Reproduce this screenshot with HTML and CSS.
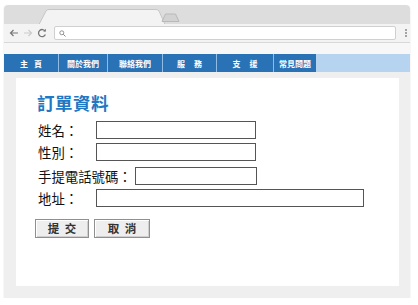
FILE: index.html
```html
<!DOCTYPE html>
<html lang="zh-Hant">
<head>
<meta charset="utf-8">
<title>訂單資料</title>
<link rel="stylesheet" href="styles.css">
</head>
<body>
<div class="window">
  <div class="tabbar">
    <svg class="tabs" width="406" height="19" viewBox="0 0 406 19">
      <path d="M35 19.5 L42 6 Q43 4.5 45 4.5 L152 4.5 Q154 4.5 155 6 L161 19.5 Z" fill="#f3f3f3" stroke="#c6c6c6" stroke-width="1"/>
      <path d="M158 16.5 L161.5 9 L171.5 9 L175 16.5 Z" fill="#d2d2d2" stroke="#b9b9b9" stroke-width="1"/>
    </svg>
  </div>
  <div class="toolbar">
    <svg class="tb-icon" width="10" height="10" viewBox="0 0 10 10"><path d="M9 5 H1.5 M4.5 2 L1.5 5 L4.5 8" fill="none" stroke="#777" stroke-width="1.2"/></svg>
    <svg class="tb-icon" width="10" height="10" viewBox="0 0 10 10"><path d="M1 5 H8.5 M5.5 2 L8.5 5 L5.5 8" fill="none" stroke="#ccc" stroke-width="1.2"/></svg>
    <svg class="tb-icon" width="10" height="10" viewBox="0 0 10 10"><path d="M8.2 3.2 A3.6 3.6 0 1 0 8.4 6.6" fill="none" stroke="#777" stroke-width="1.3"/><path d="M6.2 3.4 L9 3.6 L8.8 0.8 Z" fill="#777"/></svg>
    <div class="address">
      <svg width="7" height="7" viewBox="0 0 7 7"><circle cx="2.8" cy="2.8" r="2" fill="none" stroke="#888" stroke-width="0.9"/><path d="M4.3 4.3 L6.5 6.5" stroke="#888" stroke-width="1"/></svg>
    </div>
    <div class="menu-dots"><span></span><span></span><span></span></div>
  </div>
  <div class="spacer"></div>
  <nav class="navbar">
    <ul class="nav">
      <li class="nav-item">主 頁</li>
      <li class="nav-item">關於我們</li>
      <li class="nav-item">聯絡我們</li>
      <li class="nav-item">服 務</li>
      <li class="nav-item">支 援</li>
      <li class="nav-item">常見問題</li>
    </ul>
  </nav>
  <main class="main">
    <section class="card">
      <h1 class="title">訂單資料</h1>
      <form class="form">
        <div class="row"><label class="label">姓名：</label><input class="field field-short" type="text"></div>
        <div class="row"><label class="label">性別：</label><input class="field field-short" type="text"></div>
        <div class="row"><label class="label">手提電話號碼：</label><input class="field field-phone" type="text"></div>
        <div class="row"><label class="label">地址：</label><input class="field field-long" type="text"></div>
        <div class="buttons">
          <button class="btn btn-submit" type="button">提 交</button>
          <button class="btn btn-cancel" type="button">取 消</button>
        </div>
      </form>
    </section>
  </main>
</div>
</body>
</html>
```
FILE: styles.css
```css
* { box-sizing: border-box; }
html, body { margin: 0; padding: 0; background: #ffffff; }
body { font-family: "Noto Sans CJK TC", "Noto Sans", sans-serif; }

.window {
  margin: 5px 0 0 4px;
  width: 406px;
  height: 293px;
  display: flex;
  flex-direction: column;
  background: #efefef;
  border-radius: 4px 4px 2px 2px;
  box-shadow: 0 1px 2px rgba(0,0,0,0.12);
  overflow: hidden;
}

.tabbar {
  height: 19px;
  background: #dddddd;
  border-radius: 4px 4px 0 0;
  flex: none;
}
.tabs { display: block; }

.toolbar {
  height: 19px;
  flex: none;
  background: #f3f3f3;
  border-bottom: 1px solid #d8d8d8;
  display: flex;
  align-items: center;
  padding: 0 0 0 5px;
  gap: 4px;
}
.tb-icon { display: block; flex: none; }
.address {
  margin-left: 3px;
  width: 342px;
  height: 14px;
  background: #ffffff;
  border: 1px solid #d0d0d0;
  border-radius: 2px;
  display: flex;
  align-items: center;
  padding-left: 4px;
}
.menu-dots {
  margin-left: 5px;
  display: flex;
  flex-direction: column;
  gap: 1px;
}
.menu-dots span {
  width: 2px;
  height: 2px;
  background: #888;
  border-radius: 50%;
}

.spacer { height: 11px; flex: none; background: #f7f7f7; }

.navbar {
  height: 18px;
  flex: none;
  background: #b6d4ef;
}
.nav {
  list-style: none;
  margin: 0;
  padding: 0;
  display: flex;
  height: 100%;
}
.nav-item {
  background: #2a72b6;
  color: #ffffff;
  font-size: 8px;
  font-weight: 700;
  word-spacing: 4px;
  display: flex;
  align-items: center;
  justify-content: center;
  border-right: 1px solid #8fbbe4;
}
.nav-item:nth-child(1) { width: 55px; }
.nav-item:nth-child(2) { width: 49px; }
.nav-item:nth-child(3) { width: 55px; }
.nav-item:nth-child(4) { width: 54px; word-spacing: 7px; }
.nav-item:nth-child(5) { width: 57px; word-spacing: 7px; }
.nav-item:nth-child(6) { width: 42px; border-right: none; }

.main {
  flex: 1;
  background: #efefef;
  padding: 6px 11px 12px 12px;
  display: flex;
}
.card {
  flex: 1;
  background: #ffffff;
  padding: 14px 0 0 21px;
}
.title {
  margin: 0 0 7px 0;
  font-size: 17.5px;
  line-height: 22px;
  font-weight: 700;
  color: #1f78c3;
  letter-spacing: 0.5px;
}

.form { margin: 0; }
.row {
  display: flex;
  align-items: center;
  margin-bottom: 4px;
}
.row:nth-child(2) { margin-bottom: 6px; }
.label {
  min-width: 56px;
  margin-right: 3px;
  font-size: 13.4px;
  line-height: 18px;
  color: #111111;
  padding-left: 1px;
}
.field {
  height: 18px;
  border: 1px solid #555555;
  background: #ffffff;
  padding: 0 3px;
  margin: 0;
  font: inherit;
}
.field-short { width: 160px; }
.field-phone { width: 122px; }
.field-long { width: 268px; }

.buttons {
  display: flex;
  gap: 5px;
  margin-top: 12px;
  margin-left: -2px;
}
.btn {
  height: 19px;
  padding: 0;
  background: #eeeeee;
  border: 1px solid #8f8f8f;
  box-shadow: inset 1px 1px 0 #ffffff, inset -1px -1px 0 #cfcfcf;
  font-family: "Noto Sans CJK TC", sans-serif;
  font-size: 11.5px;
  font-weight: 700;
  color: #333333;
  word-spacing: 3px;
  line-height: 17px;
}
.btn-submit { width: 54px; }
.btn-cancel { width: 56px; }
```
